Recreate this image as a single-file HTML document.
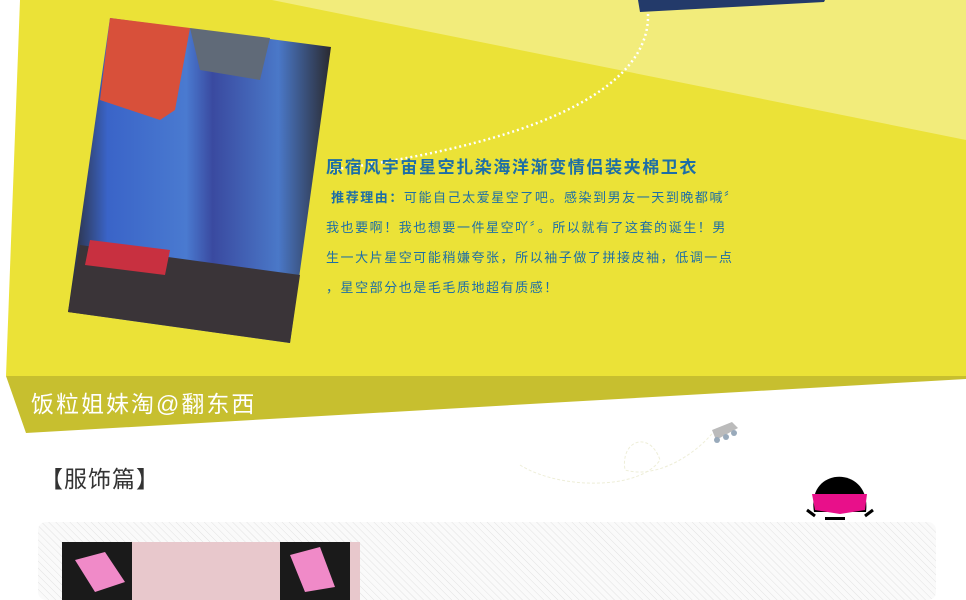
<!DOCTYPE html>
<html><head><meta charset="utf-8"><style>
body{margin:0;width:966px;height:600px;overflow:hidden;background:#fff;position:relative;font-family:"Liberation Sans","Noto Sans CJK SC",sans-serif}
.abs{position:absolute}
.t{color:#1d6ea6;font-size:13px;letter-spacing:1.55px;white-space:nowrap;left:326px}
</style></head><body>
<svg class="abs" style="left:0;top:0" width="966" height="600">
<defs>
<linearGradient id="ph" x1="0" y1="0" x2="1" y2="0">
<stop offset="0" stop-color="#2a2a30"/><stop offset="0.15" stop-color="#3a64c8"/><stop offset="0.45" stop-color="#4a7ad0"/><stop offset="0.55" stop-color="#3a4aa0"/><stop offset="0.8" stop-color="#4a78c8"/><stop offset="1" stop-color="#2a2a30"/></linearGradient>
<pattern id="hat" width="5" height="5" patternUnits="userSpaceOnUse" patternTransform="rotate(-45)"><rect width="5" height="5" fill="#fafafa"/><line x1="0" y1="0" x2="0" y2="5" stroke="#e2e2e2" stroke-width="1"/></pattern>
</defs>
<polygon points="20,0 966,0 966,376 6,376" fill="#ebe237"/>
<polygon points="272,0 966,0 966,140" fill="#f2ec7b"/>
<polygon points="638,0 825,0 824,2 640,12" fill="#233a6a"/>
<polygon points="6,376 966,376 966,379 26,433" fill="#c7bf2f"/>
<path d="M648,14 C650,80 560,140 330,170" fill="none" stroke="#fff" stroke-width="2.5" stroke-dasharray="2,3"/>
<polygon points="110,18 331,47 290,343 68,312" fill="url(#ph)"/>
<polygon points="110,18 190,28 175,110 160,120 100,100" fill="#d8503a"/>
<polygon points="190,28 270,38 260,80 200,70" fill="#606a78"/>
<polygon points="80,245 300,275 290,343 68,312" fill="#3a3438"/>
<polygon points="90,240 170,250 165,275 85,265" fill="#c83040"/>
<rect x="38" y="522" width="898" height="78" rx="8" fill="url(#hat)"/>
<rect x="62" y="542" width="298" height="58" fill="#e8c8cc"/>
<rect x="62" y="542" width="70" height="58" fill="#1a1a1a"/><rect x="280" y="542" width="70" height="58" fill="#1a1a1a"/>
<path d="M75,560 l30,-8 l20,30 l-30,10z M290,555 l30,-8 l15,40 l-30,5z" fill="#f08ac8"/>
<path d="M520,465 C560,490 640,490 660,460 C650,430 620,440 625,470 C660,480 700,450 715,430" fill="none" stroke="#eeeed8" stroke-width="1" stroke-dasharray="3,2"/>
<path d="M712,430 l20,-8 l6,6 l-22,12z" fill="#bbb"/><circle cx="717" cy="440" r="3" fill="#9ab"/><circle cx="726" cy="437" r="3" fill="#9ab"/><circle cx="734" cy="433" r="3" fill="#9ab"/>
<path d="M814,512 C806,465 872,465 866,512 z" fill="#000"/>
<path d="M807,510 l8,6 M873,510 l-8,6" stroke="#000" stroke-width="3"/>
<polygon points="812,494 867,494 865,510 840,514 815,510" fill="#e8108a"/>
<rect x="825" y="517" width="20" height="3" fill="#000"/>
</svg>
<div class="abs" style="left:326px;top:153px;font-size:17px;font-weight:bold;color:#1d6ea6;letter-spacing:1.6px;white-space:nowrap">原宿风宇宙星空扎染海洋渐变情侣装夹棉卫衣</div>
<div class="abs t" style="top:187px"><b>&nbsp;推荐理由：</b>可能自己太爱星空了吧。感染到男友一天到晚都喊〞</div>
<div class="abs t" style="top:217px">我也要啊！我也想要一件星空吖〞。所以就有了这套的诞生！男</div>
<div class="abs t" style="top:247px">生一大片星空可能稍嫌夸张，所以袖子做了拼接皮袖，低调一点</div>
<div class="abs t" style="top:277px">，星空部分也是毛毛质地超有质感！</div>
<div class="abs" style="left:31px;top:385px;font-size:23px;color:#fff;letter-spacing:2px;white-space:nowrap">饭粒姐妹淘@翻东西</div>
<div class="abs" style="left:40px;top:460px;font-size:23px;color:#333;letter-spacing:1px;white-space:nowrap">【服饰篇】</div>
</body></html>
